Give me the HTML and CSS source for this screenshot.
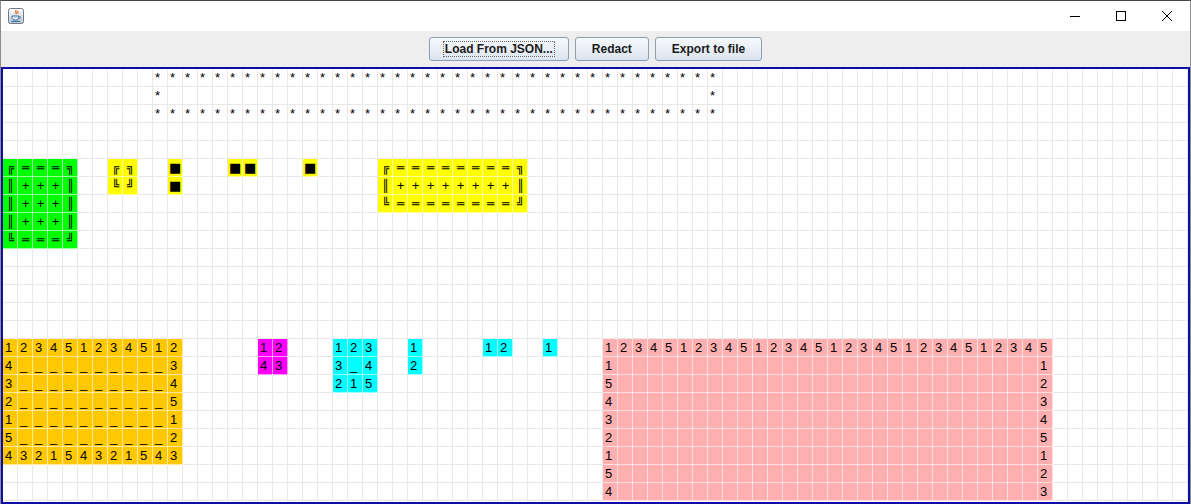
FILE: index.html
```html
<!DOCTYPE html>
<html lang="en">
<head>
<meta charset="utf-8">
<title>Redactor</title>
<link rel="stylesheet" href="styles.css">
</head>
<body>
<div class="window">
  <header class="titlebar">
    <svg class="app-icon" viewBox="0 0 16 16" aria-hidden="true">
      <defs>
        <linearGradient id="ig" x1="0" y1="0" x2="0" y2="1">
          <stop offset="0" stop-color="#ffffff"/>
          <stop offset="1" stop-color="#b9c6d4"/>
        </linearGradient>
      </defs>
      <rect x="0.5" y="0.5" width="15" height="15" rx="2" fill="url(#ig)" stroke="#6f7882"/>
      <path d="M8.2 2.2c-1.8 1.4 1.3 2.2 -0.5 4 M10 3c-1.1 1 .9 1.4 -.4 2.6" fill="none" stroke="#e2560c" stroke-width="1.2"/>
      <path d="M4 8h6.8v1.7c0 1.6-1.5 2.5-3.4 2.5s-3.4-.9-3.4-2.5z" fill="#dfe8f2" stroke="#3f6f9a" stroke-width="1"/>
      <path d="M10.8 8.6h1c1 0 1 1.8 0 1.8h-1" fill="none" stroke="#3f6f9a" stroke-width="1"/>
      <path d="M3.2 13.4h9" stroke="#3f6f9a" stroke-width="1.1"/>
    </svg>
    <div class="controls">
      <span class="ctl"><svg viewBox="0 0 10 10" class="ctl-icon"><path d="M0 5.5h10" stroke="#000" stroke-width="1"/></svg></span>
      <span class="ctl"><svg viewBox="0 0 10 10" class="ctl-icon"><rect x="0.5" y="0.5" width="9" height="9" fill="none" stroke="#000" stroke-width="1"/></svg></span>
      <span class="ctl"><svg viewBox="0 0 10 10" class="ctl-icon"><path d="M0 0L10 10M10 0L0 10" stroke="#000" stroke-width="1"/></svg></span>
    </div>
  </header>

  <div class="toolbar">
    <button class="btn btn-load"><span class="focus">Load From JSON...</span></button>
    <button class="btn btn-redact">Redact</button>
    <button class="btn btn-export">Export to file</button>
  </div>

  <main class="panel">
    <div class="canvas">
      <div class="blk stars">
        <span class="c">*</span><span class="c">*</span><span class="c">*</span><span class="c">*</span><span class="c">*</span><span class="c">*</span><span class="c">*</span><span class="c">*</span><span class="c">*</span><span class="c">*</span><span class="c">*</span><span class="c">*</span><span class="c">*</span><span class="c">*</span><span class="c">*</span><span class="c">*</span><span class="c">*</span><span class="c">*</span><span class="c">*</span><span class="c">*</span><span class="c">*</span><span class="c">*</span><span class="c">*</span><span class="c">*</span><span class="c">*</span><span class="c">*</span><span class="c">*</span><span class="c">*</span><span class="c">*</span><span class="c">*</span><span class="c">*</span><span class="c">*</span><span class="c">*</span><span class="c">*</span><span class="c">*</span><span class="c">*</span><span class="c">*</span><span class="c">*</span>
        <span class="c">*</span><span class="gap36"></span><span class="c">*</span>
        <span class="c">*</span><span class="c">*</span><span class="c">*</span><span class="c">*</span><span class="c">*</span><span class="c">*</span><span class="c">*</span><span class="c">*</span><span class="c">*</span><span class="c">*</span><span class="c">*</span><span class="c">*</span><span class="c">*</span><span class="c">*</span><span class="c">*</span><span class="c">*</span><span class="c">*</span><span class="c">*</span><span class="c">*</span><span class="c">*</span><span class="c">*</span><span class="c">*</span><span class="c">*</span><span class="c">*</span><span class="c">*</span><span class="c">*</span><span class="c">*</span><span class="c">*</span><span class="c">*</span><span class="c">*</span><span class="c">*</span><span class="c">*</span><span class="c">*</span><span class="c">*</span><span class="c">*</span><span class="c">*</span><span class="c">*</span><span class="c">*</span>
      </div>

      <div class="blk green boxed">
        <span class="c">╔</span><span class="c">═</span><span class="c">═</span><span class="c">═</span><span class="c">╗</span>
        <span class="c">║</span><span class="c">+</span><span class="c">+</span><span class="c">+</span><span class="c">║</span>
        <span class="c">║</span><span class="c">+</span><span class="c">+</span><span class="c">+</span><span class="c">║</span>
        <span class="c">║</span><span class="c">+</span><span class="c">+</span><span class="c">+</span><span class="c">║</span>
        <span class="c">╚</span><span class="c">═</span><span class="c">═</span><span class="c">═</span><span class="c">╝</span>
      </div>

      <div class="blk yellow boxed y-small">
        <span class="c">╔</span><span class="c">╗</span>
        <span class="c">╚</span><span class="c">╝</span>
      </div>

      <div class="blk yellow sq-col"><span class="c sq">■</span><span class="c sq">■</span></div>
      <div class="blk yellow sq-pair"><span class="c sq">■</span><span class="c sq">■</span></div>
      <div class="blk yellow sq-one"><span class="c sq">■</span></div>

      <div class="blk yellow boxed y-wide">
        <span class="c">╔</span><span class="c">═</span><span class="c">═</span><span class="c">═</span><span class="c">═</span><span class="c">═</span><span class="c">═</span><span class="c">═</span><span class="c">═</span><span class="c">╗</span>
        <span class="c">║</span><span class="c">+</span><span class="c">+</span><span class="c">+</span><span class="c">+</span><span class="c">+</span><span class="c">+</span><span class="c">+</span><span class="c">+</span><span class="c">║</span>
        <span class="c">╚</span><span class="c">═</span><span class="c">═</span><span class="c">═</span><span class="c">═</span><span class="c">═</span><span class="c">═</span><span class="c">═</span><span class="c">═</span><span class="c">╝</span>
      </div>

      <div class="blk orange">
        <span class="c">1</span><span class="c">2</span><span class="c">3</span><span class="c">4</span><span class="c">5</span><span class="c">1</span><span class="c">2</span><span class="c">3</span><span class="c">4</span><span class="c">5</span><span class="c">1</span><span class="c">2</span>
        <span class="c">4</span><span class="c">_</span><span class="c">_</span><span class="c">_</span><span class="c">_</span><span class="c">_</span><span class="c">_</span><span class="c">_</span><span class="c">_</span><span class="c">_</span><span class="c">_</span><span class="c">3</span>
        <span class="c">3</span><span class="c">_</span><span class="c">_</span><span class="c">_</span><span class="c">_</span><span class="c">_</span><span class="c">_</span><span class="c">_</span><span class="c">_</span><span class="c">_</span><span class="c">_</span><span class="c">4</span>
        <span class="c">2</span><span class="c">_</span><span class="c">_</span><span class="c">_</span><span class="c">_</span><span class="c">_</span><span class="c">_</span><span class="c">_</span><span class="c">_</span><span class="c">_</span><span class="c">_</span><span class="c">5</span>
        <span class="c">1</span><span class="c">_</span><span class="c">_</span><span class="c">_</span><span class="c">_</span><span class="c">_</span><span class="c">_</span><span class="c">_</span><span class="c">_</span><span class="c">_</span><span class="c">_</span><span class="c">1</span>
        <span class="c">5</span><span class="c">_</span><span class="c">_</span><span class="c">_</span><span class="c">_</span><span class="c">_</span><span class="c">_</span><span class="c">_</span><span class="c">_</span><span class="c">_</span><span class="c">_</span><span class="c">2</span>
        <span class="c">4</span><span class="c">3</span><span class="c">2</span><span class="c">1</span><span class="c">5</span><span class="c">4</span><span class="c">3</span><span class="c">2</span><span class="c">1</span><span class="c">5</span><span class="c">4</span><span class="c">3</span>
      </div>

      <div class="blk magenta">
        <span class="c">1</span><span class="c">2</span>
        <span class="c">4</span><span class="c">3</span>
      </div>

      <div class="blk cyan cy-square">
        <span class="c">1</span><span class="c">2</span><span class="c">3</span>
        <span class="c">3</span><span class="c">_</span><span class="c">4</span>
        <span class="c">2</span><span class="c">1</span><span class="c">5</span>
      </div>
      <div class="blk cyan cy-col"><span class="c">1</span><span class="c">2</span></div>
      <div class="blk cyan cy-row"><span class="c">1</span><span class="c">2</span></div>
      <div class="blk cyan cy-one"><span class="c">1</span></div>

      <div class="blk pink">
        <span class="c">1</span><span class="c">2</span><span class="c">3</span><span class="c">4</span><span class="c">5</span><span class="c">1</span><span class="c">2</span><span class="c">3</span><span class="c">4</span><span class="c">5</span><span class="c">1</span><span class="c">2</span><span class="c">3</span><span class="c">4</span><span class="c">5</span><span class="c">1</span><span class="c">2</span><span class="c">3</span><span class="c">4</span><span class="c">5</span><span class="c">1</span><span class="c">2</span><span class="c">3</span><span class="c">4</span><span class="c">5</span><span class="c">1</span><span class="c">2</span><span class="c">3</span><span class="c">4</span><span class="c">5</span>
        <span class="c">1</span><span class="gap28"></span><span class="c">1</span>
        <span class="c">5</span><span class="gap28"></span><span class="c">2</span>
        <span class="c">4</span><span class="gap28"></span><span class="c">3</span>
        <span class="c">3</span><span class="gap28"></span><span class="c">4</span>
        <span class="c">2</span><span class="gap28"></span><span class="c">5</span>
        <span class="c">1</span><span class="gap28"></span><span class="c">1</span>
        <span class="c">5</span><span class="gap28"></span><span class="c">2</span>
        <span class="c">4</span><span class="gap28"></span><span class="c">3</span>
      </div>
    </div>
  </main>
</div>
</body>
</html>
```

FILE: styles.css
```css
:root {
  --line: #e8e8e8;
  --line-on: rgba(255, 255, 255, 0.6);
  --cw: 15px;
  --ch: 18px;
}

* { box-sizing: border-box; }

html, body {
  margin: 0;
  padding: 0;
}

body {
  width: 1191px;
  height: 504px;
  overflow: hidden;
  background: #ffffff;
  font-family: "Liberation Sans", Arial, sans-serif;
}

.window {
  width: 1191px;
  height: 504px;
  display: flex;
  flex-direction: column;
  border: 1px solid #8e8e8e;
  border-top-color: #474747;
  border-bottom: 0;
}

/* ---------- title bar ---------- */
.titlebar {
  flex: none;
  height: 30px;
  display: flex;
  align-items: center;
  background: #ffffff;
}

.app-icon {
  width: 16px;
  height: 16px;
  margin-left: 7px;
  margin-top: -1px;
}

.controls {
  margin-left: auto;
  display: flex;
  height: 30px;
}

.ctl {
  width: 46px;
  height: 30px;
  display: flex;
  align-items: center;
  justify-content: center;
}

.ctl-icon {
  width: 10px;
  height: 10px;
  shape-rendering: crispEdges;
}

/* ---------- toolbar ---------- */
.toolbar {
  flex: none;
  height: 36px;
  background: #eeeeee;
  display: flex;
  justify-content: center;
  align-items: flex-start;
  gap: 6px;
  padding-top: 6px;
}

.btn {
  height: 24px;
  margin: 0;
  padding: 0 16px;
  border: 1px solid #8b9db3;
  border-radius: 3px;
  background: linear-gradient(#f7f9fc, #e9eff5 50%, #dbe4ee);
  font-family: "Liberation Sans", Arial, sans-serif;
  font-weight: bold;
  font-size: 12px;
  color: #1b1b1b;
  line-height: 14px;
}

.btn-load { padding: 0 13px; }
.btn-redact { padding: 0 16px; }
.btn-export { padding: 0 16px; }

.focus {
  display: inline-block;
  padding: 0 1px;
  border: 1px dotted #6b6b6b;
  line-height: 14px;
}

/* ---------- drawing panel ---------- */
.panel {
  flex: 1;
  border: 2px solid #0e0ea6;
  background: #ffffff;
}

.canvas {
  display: grid;
  grid-template-columns: repeat(79, var(--cw));
  grid-template-rows: repeat(24, var(--ch));
  background-image:
    linear-gradient(to right, transparent 14px, var(--line) 14px),
    linear-gradient(to bottom, transparent 17px, var(--line) 17px);
  background-size: var(--cw) var(--ch);
  font-family: "Liberation Sans", "DejaVu Sans", Arial, sans-serif;
  font-size: 13px;
  color: #000000;
}

.blk {
  display: grid;
  grid-auto-rows: var(--ch);
}

.c {
  display: block;
  width: var(--cw);
  height: var(--ch);
  line-height: var(--ch);
  padding-left: 2px;
  white-space: pre;
  overflow: visible;
}

/* box-drawing frames: narrow glyphs that don't join across cells */
.boxed .c {
  font-family: "DejaVu Sans Mono", monospace;
  font-size: 12px;
  padding-left: 4px;
  line-height: 19px;
}

.sq {
  font-family: "DejaVu Sans", sans-serif;
  font-size: 13px;
  padding-left: 1px;
  line-height: 17px;
}

.gap36 { grid-column: span 36; }
.gap28 { grid-column: span 28; }

/* colour fills with the grid lines drawn over them */
.green, .yellow, .orange, .magenta, .cyan, .pink {
  background-image:
    linear-gradient(to right, transparent 14px, var(--line-on) 14px),
    linear-gradient(to bottom, transparent 17px, var(--line-on) 17px);
  background-size: var(--cw) var(--ch);
}

.green   { background-color: #00ff00; }
.yellow  { background-color: #ffff00; }
.orange  { background-color: #ffc800; }
.magenta { background-color: #ff00ff; }
.cyan    { background-color: #00ffff; }
.pink    { background-color: #ffafaf; }

/* block placement on the cell canvas */
.stars {
  grid-column: 11 / span 38;
  grid-row: 1 / span 3;
  grid-template-columns: repeat(38, var(--cw));
}

.green {
  grid-column: 1 / span 5;
  grid-row: 6 / span 5;
  grid-template-columns: repeat(5, var(--cw));
}

.y-small {
  grid-column: 8 / span 2;
  grid-row: 6 / span 2;
  grid-template-columns: repeat(2, var(--cw));
}

.sq-col {
  grid-column: 12 / span 1;
  grid-row: 6 / span 2;
  grid-template-columns: var(--cw);
}

.sq-pair {
  grid-column: 16 / span 2;
  grid-row: 6 / span 1;
  grid-template-columns: repeat(2, var(--cw));
}

.sq-one {
  grid-column: 21 / span 1;
  grid-row: 6 / span 1;
  grid-template-columns: var(--cw);
}

.y-wide {
  grid-column: 26 / span 10;
  grid-row: 6 / span 3;
  grid-template-columns: repeat(10, var(--cw));
}

.orange {
  grid-column: 1 / span 12;
  grid-row: 16 / span 7;
  grid-template-columns: repeat(12, var(--cw));
}

.magenta {
  grid-column: 18 / span 2;
  grid-row: 16 / span 2;
  grid-template-columns: repeat(2, var(--cw));
}

.cy-square {
  grid-column: 23 / span 3;
  grid-row: 16 / span 3;
  grid-template-columns: repeat(3, var(--cw));
}

.cy-col {
  grid-column: 28 / span 1;
  grid-row: 16 / span 2;
  grid-template-columns: var(--cw);
}

.cy-row {
  grid-column: 33 / span 2;
  grid-row: 16 / span 1;
  grid-template-columns: repeat(2, var(--cw));
}

.cy-one {
  grid-column: 37 / span 1;
  grid-row: 16 / span 1;
  grid-template-columns: var(--cw);
}

.pink {
  grid-column: 41 / span 30;
  grid-row: 16 / span 9;
  grid-template-columns: repeat(30, var(--cw));
}
```
